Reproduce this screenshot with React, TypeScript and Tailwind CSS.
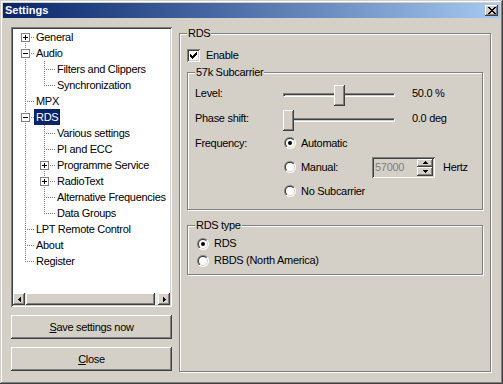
import { useId } from "react";

const RAISED = "shadow-[inset_-1px_-1px_#404040,inset_1px_1px_#ffffff,inset_-2px_-2px_#808080]";
const SUNKEN = "shadow-[inset_1px_1px_#808080,inset_-1px_-1px_#ffffff,inset_2px_2px_#404040,inset_-2px_-2px_#d4d0c8]";
const ETCHED = "border border-[#808080] shadow-[inset_1px_1px_#ffffff,1px_1px_#ffffff]";

const CHECK = ["......X", ".....XX", "X...XXX", "XX.XXX.", "XXXXX..", ".XXX...", "..X...."];
const CLOSE_X = ["XX....XX", ".XX..XX.", "..XXXX..", "...XX...", "..XXXX..", ".XX..XX.", "XX....XX"];
const ARROW_UP = ["..X..", ".XXX.", "XXXXX"];
const ARROW_DOWN = ["XXXXX", ".XXX.", "..X.."];
const ARROW_LEFT = ["..X", ".XX", "XXX", ".XX", "..X"];
const ARROW_RIGHT = ["X..", "XX.", "XXX", "XX.", "X.."];

const Pixels = ({ rows, color = "#000000" }: { rows: string[]; color?: string }) => (
  <svg width={rows[0].length} height={rows.length} shapeRendering="crispEdges" className="shrink-0">
    {rows.flatMap((row, y) =>
      row.split("").map((c, x) => (c === "X" ? <rect key={`${x}-${y}`} x={x} y={y} width={1} height={1} fill={color} /> : null))
    )}
  </svg>
);

type Cell = "first" | "tee" | "ell" | "pipe";

interface TreeNode {
  label: string;
  cells: Cell[];
  box?: "plus" | "minus";
  selected?: boolean;
}

const TREE: TreeNode[] = [
  { label: "General", cells: ["first"], box: "plus" },
  { label: "Audio", cells: ["tee"], box: "minus" },
  { label: "Filters and Clippers", cells: ["pipe", "tee"] },
  { label: "Synchronization", cells: ["pipe", "ell"] },
  { label: "MPX", cells: ["tee"] },
  { label: "RDS", cells: ["tee"], box: "minus", selected: true },
  { label: "Various settings", cells: ["pipe", "tee"] },
  { label: "PI and ECC", cells: ["pipe", "tee"] },
  { label: "Programme Service", cells: ["pipe", "tee"], box: "plus" },
  { label: "RadioText", cells: ["pipe", "tee"], box: "plus" },
  { label: "Alternative Frequencies", cells: ["pipe", "tee"] },
  { label: "Data Groups", cells: ["pipe", "ell"] },
  { label: "LPT Remote Control", cells: ["tee"] },
  { label: "About", cells: ["tee"] },
  { label: "Register", cells: ["ell"] },
];

const TreeCell = ({ kind, width, col, box }: { kind: Cell; width: number; col: number; box?: "plus" | "minus" }) => {
  const x = col + 0.5;
  return (
    <svg width={width} height={16} className="shrink-0" shapeRendering="crispEdges">
      <g stroke="#808080" strokeDasharray="1 1">
        {kind !== "first" && <line x1={x} y1={0} x2={x} y2={8} />}
        {kind !== "ell" && <line x1={x} y1={8} x2={x} y2={16} />}
        {kind !== "pipe" && <line x1={col} y1={8.5} x2={width} y2={8.5} />}
      </g>
      {box && (
        <g>
          <rect x={col - 3.5} y={4.5} width={8} height={8} fill="#ffffff" stroke="#808080" />
          <rect x={col - 2} y={8} width={5} height={1} fill="#000000" />
          {box === "plus" && <rect x={col} y={6} width={1} height={5} fill="#000000" />}
        </g>
      )}
    </svg>
  );
};

const Radio = ({ checked = false }: { checked?: boolean }) => {
  const id = useId();
  return (
    <svg width={12} height={12} viewBox="0 0 12 12" className="shrink-0">
      <defs>
        <linearGradient id={`${id}o`} x1="0" y1="0" x2="1" y2="1">
          <stop offset="0.5" stopColor="#808080" />
          <stop offset="0.5" stopColor="#ffffff" />
        </linearGradient>
        <linearGradient id={`${id}i`} x1="0" y1="0" x2="1" y2="1">
          <stop offset="0.5" stopColor="#404040" />
          <stop offset="0.5" stopColor="#d4d0c8" />
        </linearGradient>
      </defs>
      <circle cx={6} cy={6} r={6} fill={`url(#${id}o)`} />
      <circle cx={6} cy={6} r={5} fill={`url(#${id}i)`} />
      <circle cx={6} cy={6} r={4} fill="#ffffff" />
      {checked && <circle cx={6} cy={6} r={2} fill="#000000" />}
    </svg>
  );
};

const Checkbox = () => (
  <div className={`flex h-[13px] w-[13px] shrink-0 items-center justify-center bg-white ${SUNKEN}`}>
    <Pixels rows={CHECK} />
  </div>
);

const Slider = ({ thumb }: { thumb: string }) => (
  <div className="relative mt-[3px] h-[21px] w-[112px] shrink-0">
    <div className="absolute top-[8px] right-0 left-0 h-[4px] border border-t-[#808080] border-r-white border-b-white border-l-[#808080] bg-[#d4d0c8] shadow-[inset_1px_1px_#404040]" />
    <div className={`absolute top-0 h-[21px] w-[11px] bg-[#d4d0c8] ${RAISED} ${thumb}`} />
  </div>
);

const SpinEdit = () => (
  <div className={`flex h-[21px] w-[63px] shrink-0 bg-[#d4d0c8] p-[2px] ${SUNKEN}`}>
    <span className="flex-1 pl-[1px] leading-[17px] text-[#808080]">57000</span>
    <div className="flex w-[16px] flex-col">
      <div className={`flex h-[8px] items-center justify-center bg-[#d4d0c8] ${RAISED}`}>
        <Pixels rows={ARROW_UP} />
      </div>
      <div className={`flex flex-1 items-center justify-center bg-[#d4d0c8] ${RAISED}`}>
        <Pixels rows={ARROW_DOWN} />
      </div>
    </div>
  </div>
);

const TreeView = () => (
  <div className={`flex h-[280px] flex-col bg-white p-[2px] ${SUNKEN}`}>
    <div className="flex-1 overflow-hidden pl-[3px]">
      {TREE.map((node) => (
        <div key={node.label} className="flex h-[16px] items-center">
          {node.cells.map((c, i) => (
            <TreeCell
              key={i}
              kind={c}
              width={i === 0 ? 18 : 21}
              col={i === 0 ? 9 : 10}
              box={i === node.cells.length - 1 ? node.box : undefined}
            />
          ))}
          <span className={`px-[2px] leading-[16px] whitespace-nowrap ${node.selected ? "bg-[#0a246a] text-white" : ""}`}>
            {node.label}
          </span>
        </div>
      ))}
    </div>
    <div className="flex h-[12px] bg-[#ebe9e4]">
      <div className={`flex w-[12px] items-center justify-center bg-[#d4d0c8] ${RAISED}`}>
        <Pixels rows={ARROW_LEFT} />
      </div>
      <div className={`ml-[1px] w-[129px] bg-[#d4d0c8] ${RAISED}`} />
      <div className="flex-1" />
      <div className={`flex w-[12px] items-center justify-center bg-[#d4d0c8] ${RAISED}`}>
        <Pixels rows={ARROW_RIGHT} />
      </div>
    </div>
  </div>
);

export default function App() {
  return (
    <div className="flex h-[384px] w-[503px] flex-col bg-[#d4d0c8] p-[3px] font-['Liberation_Sans',Arial,sans-serif] text-[11px] tracking-[-0.3px] text-black shadow-[inset_-1px_-1px_#404040,inset_1px_1px_#d4d0c8,inset_-2px_-2px_#808080,inset_2px_2px_#ffffff]">
      <div className="flex h-[15px] items-center justify-between bg-linear-to-r from-[#0a246a] to-[#a6caf0] px-[2px]">
        <span className="leading-[15px] font-bold tracking-normal text-white">Settings</span>
        <div className={`flex h-[11px] w-[13px] items-center justify-center bg-[#d4d0c8] ${RAISED}`}>
          <Pixels rows={CLOSE_X} />
        </div>
      </div>

      <div className="flex flex-1 gap-[7px] pt-[9px] pr-[9px] pb-[9px] pl-[8px]">
        <div className="flex w-[161px] flex-col">
          <TreeView />
          <div className={`mt-[8px] h-[24px] bg-[#d4d0c8] text-center leading-[24px] ${RAISED}`}>
            <span className="underline underline-offset-[1px]">S</span>ave settings now
          </div>
          <div className={`mt-[8px] h-[24px] bg-[#d4d0c8] text-center leading-[24px] ${RAISED}`}>
            <span className="underline underline-offset-[1px]">C</span>lose
          </div>
        </div>

        <fieldset className={`w-[312px] px-[7px] ${ETCHED}`}>
          <legend className="bg-[#d4d0c8] px-[1px] leading-[13px]">RDS</legend>

          <div className="mt-[9px] flex h-[13px] items-center">
            <Checkbox />
            <span className="ml-[6px]">Enable</span>
          </div>

          <fieldset className={`mt-[4px] px-[7px] pb-[6px] ${ETCHED}`}>
            <legend className="bg-[#d4d0c8] px-[1px] leading-[13px]">57k Subcarrier</legend>
            <div className="mt-[2px] flex h-[25px] items-center">
              <span className="w-[88px] shrink-0">Level:</span>
              <Slider thumb="left-[51px]" />
              <span className="ml-[17px]">50.0 %</span>
            </div>
            <div className="flex h-[25px] items-center">
              <span className="w-[88px] shrink-0">Phase shift:</span>
              <Slider thumb="left-0" />
              <span className="ml-[17px]">0.0 deg</span>
            </div>
            <div className="flex h-[24px] items-center">
              <span className="w-[89px] shrink-0">Frequency:</span>
              <Radio checked />
              <span className="ml-[5px]">Automatic</span>
            </div>
            <div className="flex h-[24px] items-center">
              <span className="w-[89px] shrink-0" />
              <Radio />
              <span className="ml-[5px] w-[71px] shrink-0">Manual:</span>
              <SpinEdit />
              <span className="ml-[8px]">Hertz</span>
            </div>
            <div className="flex h-[24px] items-center">
              <span className="w-[89px] shrink-0" />
              <Radio />
              <span className="ml-[5px]">No Subcarrier</span>
            </div>
          </fieldset>

          <fieldset className={`mt-[9px] px-[7px] pb-[5px] ${ETCHED}`}>
            <legend className="bg-[#d4d0c8] px-[1px] leading-[13px]">RDS type</legend>
            <div className="mt-[3px] flex h-[17px] items-center pl-[2px]">
              <Radio checked />
              <span className="ml-[5px]">RDS</span>
            </div>
            <div className="flex h-[17px] items-center pl-[2px]">
              <Radio />
              <span className="ml-[5px]">RBDS (North America)</span>
            </div>
          </fieldset>
        </fieldset>
      </div>
    </div>
  );
}
